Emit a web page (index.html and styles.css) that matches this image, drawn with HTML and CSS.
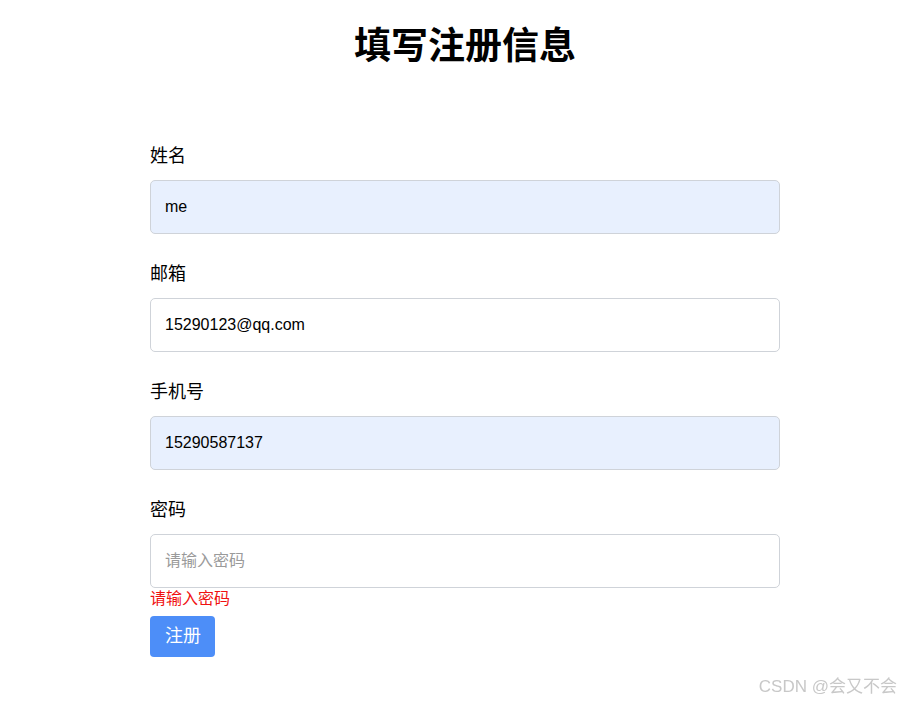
FILE: index.html
```html
<!DOCTYPE html>
<html lang="zh-CN">
<head>
<meta charset="utf-8">
<title>填写注册信息</title>
<link rel="stylesheet" href="styles.css">
</head>
<body>
<div class="page">
  <h1 class="title">填写注册信息</h1>
  <form class="form">
    <div class="field">
      <label class="label">姓名</label>
      <div class="input filled">me</div>
    </div>
    <div class="field">
      <label class="label">邮箱</label>
      <div class="input">15290123@qq.com</div>
    </div>
    <div class="field">
      <label class="label">手机号</label>
      <div class="input filled">15290587137</div>
    </div>
    <div class="field last">
      <label class="label">密码</label>
      <div class="input placeholder">请输入密码</div>
      <div class="error">请输入密码</div>
    </div>
    <div class="btn">注册</div>
  </form>
</div>
<div class="watermark">CSDN @会又不会</div>
</body>
</html>
```

FILE: styles.css
```css
html, body {
  margin: 0;
  padding: 0;
  background: #fff;
}
body {
  font-family: "Liberation Sans", "Noto Sans CJK SC", sans-serif;
  color: #000;
  width: 901px;
  height: 702px;
  overflow: hidden;
}
.page {
  margin-left: 150px;
  width: 630px;
}
.title {
  margin: 25px 0 0;
  font-size: 37px;
  line-height: 44px;
  font-weight: 700;
  text-align: center;
}
.form {
  margin-top: 75px;
  display: flex;
  flex-direction: column;
}
.field {
  display: flex;
  flex-direction: column;
  margin-bottom: 28px;
}
.field.last {
  margin-bottom: 6px;
}
.label {
  font-size: 18px;
  line-height: 24px;
  margin-bottom: 12px;
}
.input {
  box-sizing: border-box;
  height: 54px;
  border: 1px solid #cfd3d9;
  border-radius: 5px;
  padding: 0 14px;
  font-size: 16px;
  line-height: 52px;
  background: #fff;
}
.input.filled {
  background: #e8f0fe;
}
.input.placeholder {
  color: #9a9a9a;
}
.error {
  color: #f01010;
  font-size: 16px;
  line-height: 22px;
}
.btn {
  align-self: flex-start;
  background: #4d8ef8;
  color: #fff;
  font-size: 18px;
  line-height: 41px;
  height: 41px;
  padding: 0 14px 0 15px;
  border-radius: 4px;
}
.watermark {
  position: fixed;
  right: 4px;
  bottom: 4px;
  font-size: 17px;
  line-height: 22px;
  color: #c8c8c8;
}
```
